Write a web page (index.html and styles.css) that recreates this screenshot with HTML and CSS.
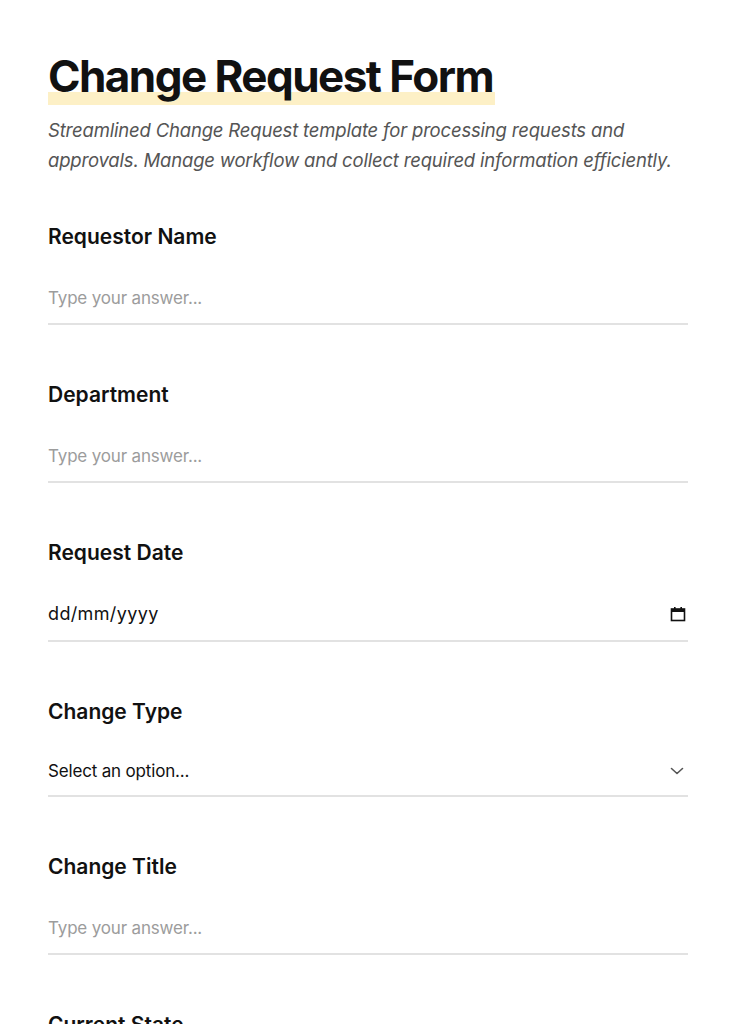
FILE: index.html
```html
<!DOCTYPE html>
<html lang="en">
<head>
<meta charset="utf-8">
<title>Change Request Form</title>
<link rel="stylesheet" href="styles.css">
</head>
<body>
<main class="page">
  <header class="intro">
    <h1 class="title"><span class="title-mark">Change Request Form</span></h1>
    <p class="subtitle">Streamlined Change Request template for processing requests and approvals. Manage workflow and collect required information efficiently.</p>
  </header>
  <form class="form">
    <div class="field">
      <label class="label" for="f1">Requestor Name</label>
      <input class="input" id="f1" type="text" placeholder="Type your answer...">
    </div>
    <div class="field">
      <label class="label" for="f2">Department</label>
      <input class="input" id="f2" type="text" placeholder="Type your answer...">
    </div>
    <div class="field">
      <label class="label">Request Date</label>
      <div class="input date">
        <span class="date-text">dd/mm/yyyy</span>
        <svg class="cal" width="16" height="16" viewBox="0 0 16 16" aria-hidden="true">
          <rect x="1.5" y="3" width="13" height="11.5" fill="none" stroke="#111" stroke-width="1.6"/>
          <rect x="1.5" y="3" width="13" height="3" fill="#111"/>
          <rect x="4" y="1" width="1.6" height="3" fill="#111"/>
          <rect x="10.4" y="1" width="1.6" height="3" fill="#111"/>
        </svg>
      </div>
    </div>
    <div class="field">
      <label class="label">Change Type</label>
      <div class="input select">
        <span class="select-text">Select an option...</span>
        <svg class="chev" width="14" height="8" viewBox="0 0 14 8" aria-hidden="true">
          <path d="M1.5 1.5 L7 6.5 L12.5 1.5" fill="none" stroke="#555" stroke-width="1.6" stroke-linecap="round" stroke-linejoin="round"/>
        </svg>
      </div>
    </div>
    <div class="field">
      <label class="label" for="f5">Change Title</label>
      <input class="input" id="f5" type="text" placeholder="Type your answer...">
    </div>
    <div class="field">
      <label class="label" for="f6">Current State</label>
      <input class="input" id="f6" type="text" placeholder="Type your answer...">
    </div>
  </form>
</main>
</body>
</html>
```

FILE: styles.css
```css
* { box-sizing: border-box; }
html, body { margin: 0; padding: 0; background: #fff; }
body {
  font-family: Inter, "Noto Sans", sans-serif;
  color: #111;
}
.page {
  padding: 50px 48px 48px;
  width: 736px;
}
.intro { margin-bottom: 48px; }
.title {
  margin: 0;
  font-size: 44px;
  line-height: 52px;
  font-weight: 700;
  letter-spacing: -0.035em;
}
.title-mark {
  display: inline-block;
  padding: 0 2px 3px 0;
  background: linear-gradient(to bottom, transparent 0, transparent 76%, #fdf0c6 76%, #fdf0c6 100%);
}
.subtitle {
  margin: 10px 0 0;
  font-size: 18.5px;
  line-height: 30px;
  font-style: italic;
  color: #555;
  letter-spacing: -0.01em;
}
.form { display: flex; flex-direction: column; gap: 56px; }
.field { display: flex; flex-direction: column; gap: 16px; }
.label {
  font-size: 21px;
  line-height: 28px;
  font-weight: 600;
  letter-spacing: 0;
  color: #111;
}
.input {
  display: block;
  width: 100%;
  height: 58px;
  margin: 0;
  padding: 19px 0 13px;
  border: 0;
  border-bottom: 2px solid #e2e2e2;
  font-family: inherit;
  font-size: 17px;
  line-height: 24px;
  color: #111;
  background: transparent;
  outline: none;
  letter-spacing: -0.01em;
}
.input::placeholder { color: #9c9c9c; }
.date {
  height: 59px;
  padding: 18px 2px 14px 0;
  display: flex;
  align-items: center;
  justify-content: space-between;
  font-size: 18px;
  letter-spacing: 0.02em;
}
.select {
  height: 55px;
  padding: 17px 2px 12px 0;
  display: flex;
  align-items: center;
  justify-content: space-between;
}
.cal { flex: none; }
.chev { flex: none; margin-right: 2px; }
```
